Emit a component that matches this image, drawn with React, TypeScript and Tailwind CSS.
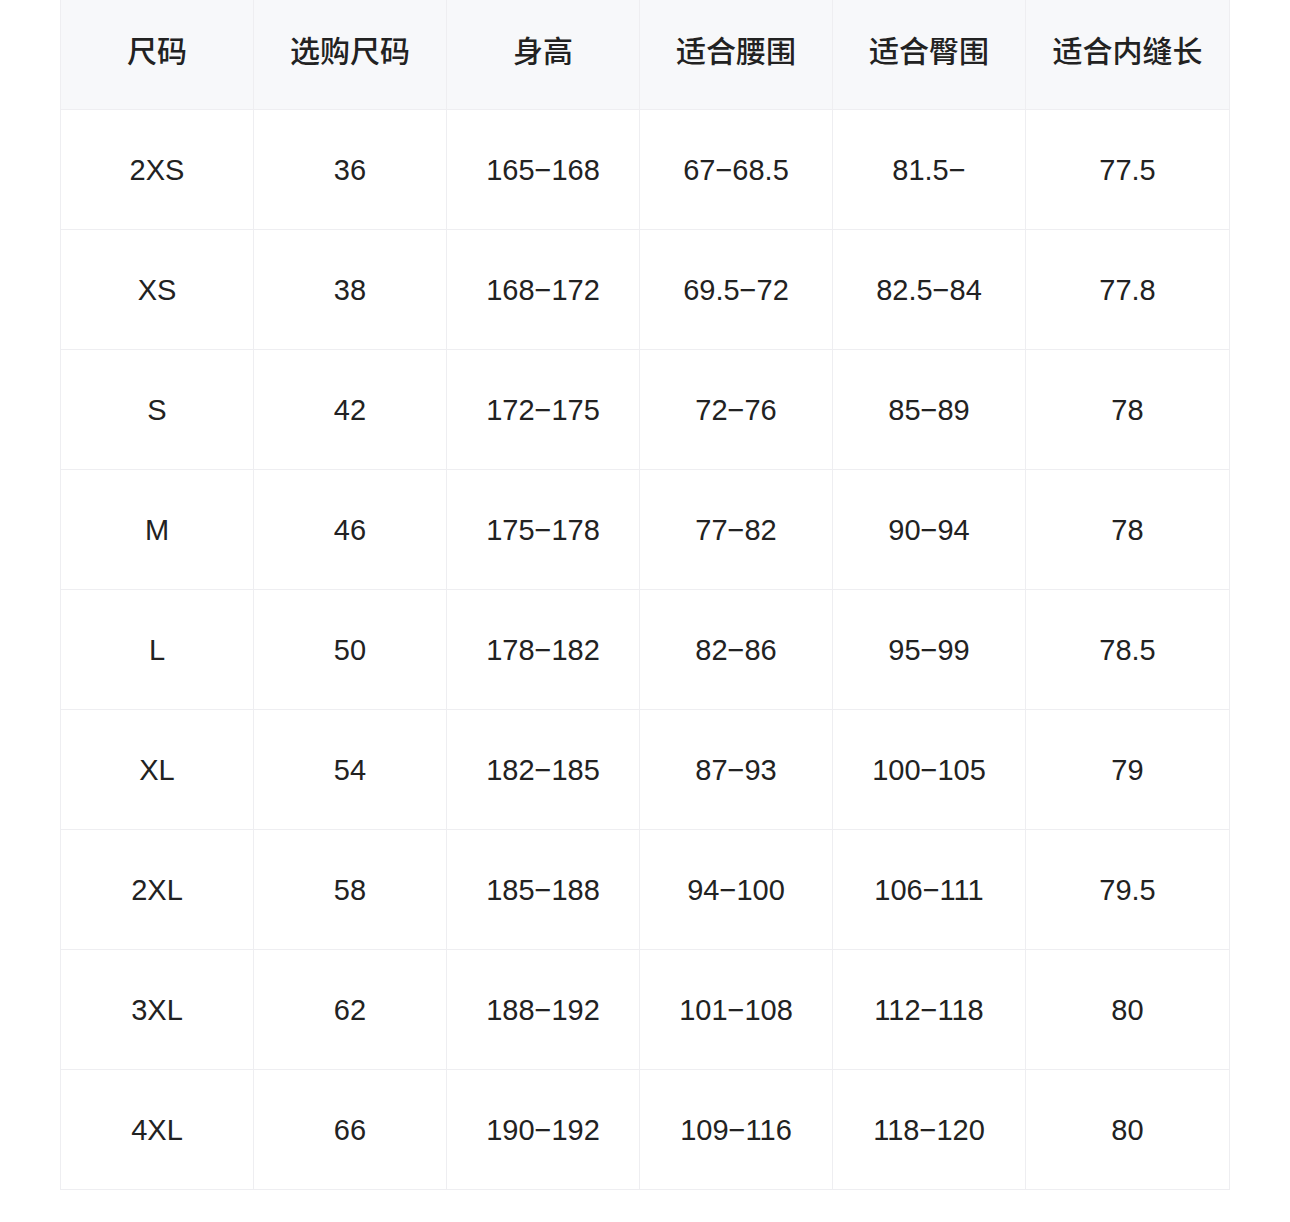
const headers = ['尺码', '选购尺码', '身高', '适合腰围', '适合臀围', '适合内缝长'];

const rows = [
  ['2XS', '36', '165−168', '67−68.5', '81.5−', '77.5'],
  ['XS', '38', '168−172', '69.5−72', '82.5−84', '77.8'],
  ['S', '42', '172−175', '72−76', '85−89', '78'],
  ['M', '46', '175−178', '77−82', '90−94', '78'],
  ['L', '50', '178−182', '82−86', '95−99', '78.5'],
  ['XL', '54', '182−185', '87−93', '100−105', '79'],
  ['2XL', '58', '185−188', '94−100', '106−111', '79.5'],
  ['3XL', '62', '188−192', '101−108', '112−118', '80'],
  ['4XL', '66', '190−192', '109−116', '118−120', '80'],
];

const cols = 'grid grid-cols-[193px_193px_193px_193px_193px_1fr]';

export default function App() {
  return (
    <div className="min-h-[1222px] w-full bg-white pb-8 font-['Liberation_Sans','Noto_Sans_CJK_SC',sans-serif] text-[#222222]">
      <div className="ml-[60px] w-[1170px] border-r border-[#eeeef1]">
        <div className={`${cols} h-[110px] bg-[#f7f8fa]`}>
          {headers.map((h) => (
            <div
              key={h}
              className="flex items-center justify-center border-l border-b border-[#eeeef1] pb-[10px] font-['Noto_Sans_CJK_SC',sans-serif] text-[30px] font-medium"
            >
              {h}
            </div>
          ))}
        </div>
        {rows.map((r) => (
          <div key={r[0]} className={`${cols} h-[120px]`}>
            {r.map((c, i) => (
              <div
                key={i}
                className="flex items-center justify-center border-l border-b border-[#eeeef1] pt-[2px] text-[29px]"
              >
                {c}
              </div>
            ))}
          </div>
        ))}
      </div>
    </div>
  );
}
